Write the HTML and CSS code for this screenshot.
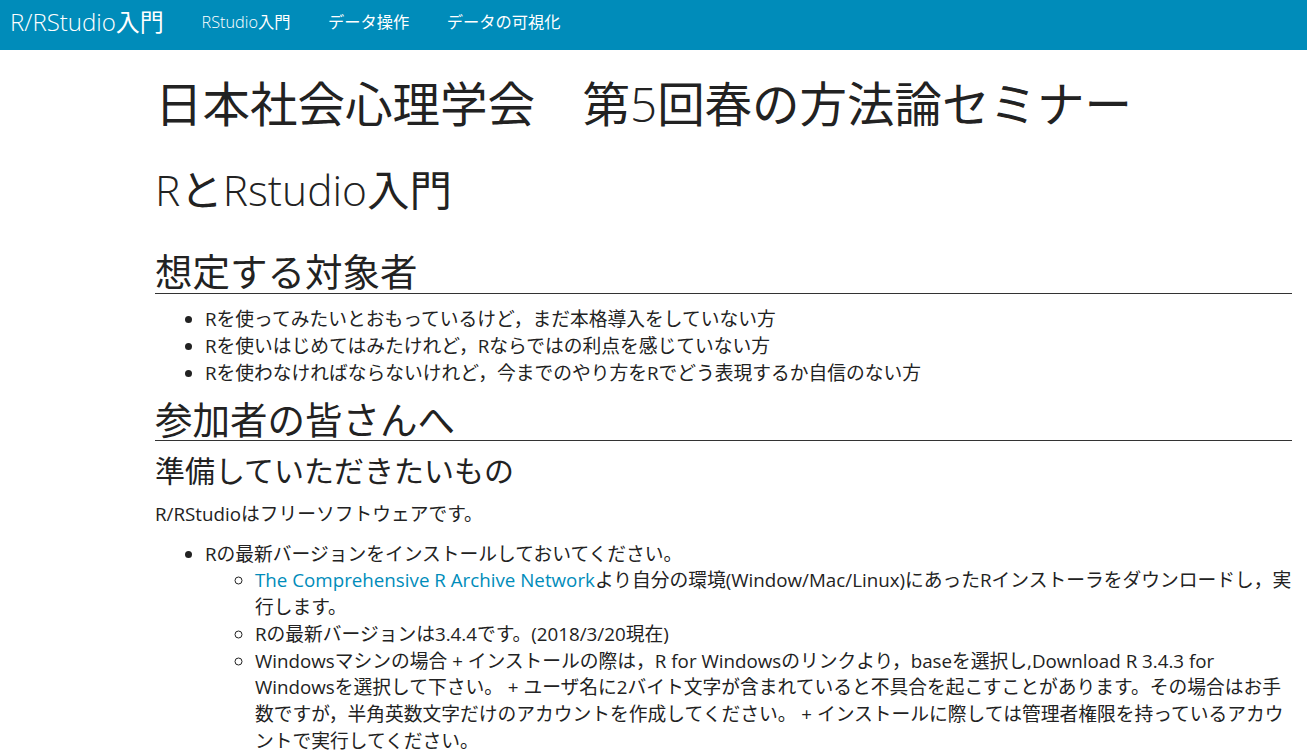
FILE: index.html
```html
<!DOCTYPE html>
<html lang="ja">
<head>
<meta charset="utf-8">
<title>R/RStudio入門</title>
<link rel="stylesheet" href="styles.css">
</head>
<body>
<nav class="navbar">
  <a class="brand" href="#"><span class="lat">R/RStudio</span>入門</a>
  <ul class="nav">
    <li><a href="#"><span class="lat">RStudio</span>入門</a></li>
    <li><a href="#">データ操作</a></li>
    <li><a href="#">データの可視化</a></li>
  </ul>
</nav>
<main class="main">
  <h1 class="title">日本社会心理学会　第<span class="lat">5</span>回春の方法論セミナー</h1>
  <h1 class="section"><span class="lat">R</span>と<span class="lat">Rstudio</span>入門</h1>
  <h2>想定する対象者</h2>
  <ul>
    <li>Rを使ってみたいとおもっているけど，まだ本格導入をしていない方</li>
    <li>Rを使いはじめてはみたけれど，Rならではの利点を感じていない方</li>
    <li>Rを使わなければならないけれど，今までのやり方をRでどう表現するか自信のない方</li>
  </ul>
  <h2>参加者の皆さんへ</h2>
  <h3>準備していただきたいもの</h3>
  <p>R/RStudioはフリーソフトウェアです。</p>
  <ul>
    <li>Rの最新バージョンをインストールしておいてください。
      <ul>
        <li><a href="#">The Comprehensive R Archive Network</a>より自分の環境(Window/Mac/Linux)にあったRインストーラをダウンロードし，実行します。</li>
        <li>Rの最新バージョンは3.4.4です。(2018/3/20現在)</li>
        <li>Windowsマシンの場合 + インストールの際は，R for Windowsのリンクより，baseを選択し,Download R 3.4.3 for Windowsを選択して下さい。 + ユーザ名に2バイト文字が含まれていると不具合を起こすことがあります。その場合はお手数ですが，半角英数文字だけのアカウントを作成してください。 + インストールに際しては管理者権限を持っているアカウントで実行してください。</li>
      </ul>
    </li>
  </ul>
</main>
</body>
</html>
```
FILE: styles.css
```css
html, body {
  margin: 0;
  padding: 0;
  background: #fff;
}
body {
  font-family: "Open Sans", "Noto Sans CJK JP", sans-serif;
  font-size: 18.75px;
  line-height: 1.42857;
  color: #222;
}
a {
  text-decoration: none;
}
.lat {
  font-weight: 300;
}
.navbar {
  height: 50px;
  background: #008cba;
  display: flex;
  align-items: flex-start;
}
.brand {
  color: #fff;
  font-size: 24px;
  font-weight: 400;
  line-height: 44px;
  padding: 0 19px 0 10px;
}
.nav {
  display: flex;
  list-style: none;
  margin: 0;
  padding: 0;
}
.nav a {
  display: block;
  color: #fff;
  font-size: 16.25px;
  font-weight: 400;
  line-height: 44px;
  padding: 0 18.75px;
}
.main {
  padding: 0 15px 0 155px;
}
h1, h2, h3 {
  font-weight: 400;
  line-height: 1.1;
  color: #222;
}
.title {
  font-size: 47.5px;
  margin: 27.9px 0 0;
}
.section {
  font-size: 42.5px;
  margin: 36.5px 0 38px;
}
h2 {
  font-size: 37.5px;
  margin: 0 0 12.5px;
  border-bottom: 1px solid #333;
}
h3 {
  font-size: 30px;
  margin: 0 0 14.5px;
}
p {
  margin: 0 0 12.5px;
}
ul {
  margin: 0 0 12.5px;
  padding-left: 50px;
}
ul ul {
  margin-bottom: 0;
  list-style-type: circle;
}
li a {
  color: #008cba;
}
```
